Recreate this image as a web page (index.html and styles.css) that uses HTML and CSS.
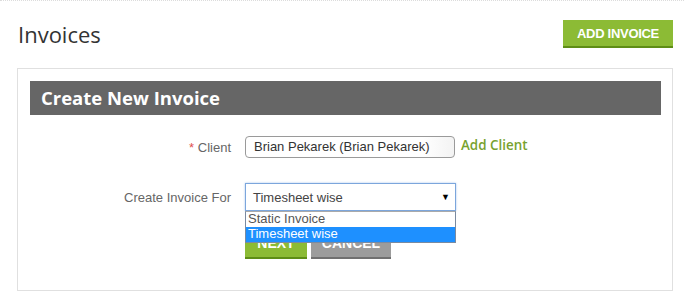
FILE: index.html
```html
<!DOCTYPE html>
<html>
<head>
<meta charset="utf-8">
<link rel="stylesheet" href="styles.css">
</head>
<body>
<div class="page">
  <div class="topbar">
    <h1 class="title">Invoices</h1>
    <a class="btn btn-green btn-add">ADD INVOICE</a>
  </div>
  <div class="panel">
    <div class="panel-head">Create New Invoice</div>
    <div class="form">
      <div class="row row-client">
        <label class="label"><span class="req">*</span> Client</label>
        <div class="input">Brian Pekarek (Brian Pekarek)</div>
        <a class="add-client">Add Client</a>
      </div>
      <div class="row row-for">
        <label class="label">Create Invoice For</label>
        <div class="select-wrap">
          <div class="select"><span>Timesheet wise</span><span class="arrow">&#9660;</span></div>
          <ul class="options">
            <li class="opt">Static Invoice</li>
            <li class="opt sel">Timesheet wise</li>
          </ul>
        </div>
      </div>
      <div class="row row-actions">
        <span class="label"></span>
        <div class="actions">
          <a class="btn btn-green btn-next">NEXT</a>
          <a class="btn btn-gray btn-cancel">CANCEL</a>
        </div>
      </div>
    </div>
  </div>
</div>
</body>
</html>
```
FILE: styles.css
```css
* { box-sizing: border-box; }
html, body { margin: 0; padding: 0; background: #fff; }
body { font-family: "Liberation Sans", Arial, sans-serif; }
.page { border-top: 1px dotted #dcdcdc; width: 684px; height: 293px; overflow: hidden; }
.topbar { display: flex; justify-content: space-between; align-items: center; padding: 19px 11px 0 18px; }
.title { margin: 0; font-family: "Open Sans", sans-serif; font-weight: 400; font-size: 22px; color: #333; line-height: 28px; }
.btn { display: inline-flex; align-items: center; justify-content: center; font-family: "Liberation Sans", Arial, sans-serif; font-weight: 700; color: #fff; text-decoration: none; }
.btn-green { background: #8cbb35; border-bottom: 2px solid #5e8d16; }
.btn-gray { background: #9c9c9c; border-bottom: 2px solid #707070; }
.btn-add { width: 110px; height: 28px; font-size: 13px; letter-spacing: -0.3px; }
.panel { margin: 20px 11px 0 17px; border: 1px solid #e0e0e0; height: 223px; padding: 12px 11px 0 12px; }
.panel-head { background: #666; color: #fff; font-family: "Open Sans", sans-serif; font-weight: 700; font-size: 18.5px; height: 34px; line-height: 34px; padding-left: 11px; }
.form { padding-top: 21px; }
.row { display: flex; align-items: center; }
.label { width: 201px; margin-right: 14px; text-align: right; font-size: 13px; color: #666; flex: none; }
.req { color: #e05050; }
.row-client { height: 22px; }
.input { width: 210px; height: 22px; border: 1px solid #9a9a9a; border-radius: 4px; font-size: 13px; color: #333; padding: 0 0 0 8px; line-height: 20px; background: linear-gradient(to right, #fff 85%, #f3f3f3); }
.add-client { margin-left: 6px; font-family: "Open Sans", sans-serif; font-weight: 600; font-size: 13.4px; color: #78a22f; position: relative; top: -2px; }
.row-for { margin-top: 25px; height: 28px; }
.select-wrap { position: relative; width: 211px; }
.select { height: 28px; border: 1px solid #7ca6dc; box-shadow: 0 0 2px #a9c8f0; display: flex; justify-content: space-between; align-items: center; padding: 0 5px 0 7px; font-size: 13px; color: #444; background: #fff; }
.arrow { font-size: 9px; color: #000; }
.options { position: absolute; left: 0; top: 28px; width: 211px; margin: 0; padding: 0; list-style: none; border: 1px solid #7a8aa0; border-top: 1px solid #aaa; background: #fff; z-index: 2; }
.opt { font-size: 13px; color: #555; height: 15px; line-height: 14px; padding-left: 2px; }
.opt.sel { background: #1e90ff; color: #fff; }
.row-actions { margin-top: 17px; }
.actions { display: flex; gap: 4px; }
.btn-next { width: 62px; height: 31px; font-size: 14px; }
.btn-cancel { width: 80px; height: 31px; font-size: 14px; }
```
